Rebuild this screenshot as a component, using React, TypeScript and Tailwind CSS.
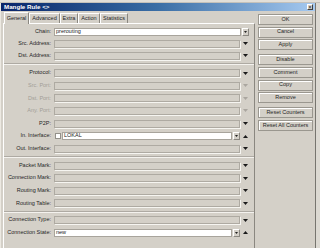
import React from 'react';

type Field = {
  label: string;
  kind: 'combo' | 'chain' | 'iface' | 'state';
  value?: string;
  dim?: boolean;
};

const groups: { rowH: string; sepBefore: string; fields: Field[] }[] = [
  {
    rowH: 'h-[11.8px]',
    sepBefore: '',
    fields: [
      { label: 'Chain:', kind: 'chain', value: 'prerouting' },
      { label: 'Src. Address:', kind: 'combo' },
      { label: 'Dst. Address:', kind: 'combo' },
    ],
  },
  {
    rowH: 'h-[12.6px]',
    sepBefore: 'h-[5.2px]',
    fields: [
      { label: 'Protocol:', kind: 'combo' },
      { label: 'Src. Port:', kind: 'combo', dim: true },
      { label: 'Dst. Port:', kind: 'combo', dim: true },
      { label: 'Any. Port:', kind: 'combo', dim: true },
      { label: 'P2P:', kind: 'combo' },
      { label: 'In. Interface:', kind: 'iface', value: 'LOKAL' },
      { label: 'Out. Interface:', kind: 'combo' },
    ],
  },
  {
    rowH: 'h-[12.6px]',
    sepBefore: 'h-[4.3px]',
    fields: [
      { label: 'Packet Mark:', kind: 'combo' },
      { label: 'Connection Mark:', kind: 'combo' },
      { label: 'Routing Mark:', kind: 'combo' },
      { label: 'Routing Table:', kind: 'combo' },
    ],
  },
  {
    rowH: 'h-[12.6px]',
    sepBefore: 'h-[4.2px]',
    fields: [
      { label: 'Connection Type:', kind: 'combo' },
      { label: 'Connection State:', kind: 'state', value: 'new' },
    ],
  },
];

const buttons = [
  { text: 'OK' },
  { text: 'Cancel' },
  { text: 'Apply' },
  { text: 'Disable', gap: true },
  { text: 'Comment' },
  { text: 'Copy' },
  { text: 'Remove' },
  { text: 'Reset Counters', gap: true },
  { text: 'Reset All Counters' },
];

const tabs = [
  { text: 'General', w: 'w-[25px]' },
  { text: 'Advanced', w: 'w-[31px]' },
  { text: 'Extra', w: 'w-[18px]' },
  { text: 'Action', w: 'w-[22px]' },
  { text: 'Statistics', w: 'w-[28px]' },
];

function DownTri({ dim }: { dim?: boolean }) {
  return (
    <svg width="5" height="3" viewBox="0 0 5 3" className="block">
      <path d="M0 0H5L2.5 3Z" fill={dim ? '#aaa69f' : '#1a1a1a'} />
    </svg>
  );
}

function UpTri() {
  return (
    <svg width="5" height="3" viewBox="0 0 5 3" className="block">
      <path d="M0 3H5L2.5 0Z" fill="#1a1a1a" />
    </svg>
  );
}

function DropBtn() {
  return (
    <div className="w-[7px] h-[8px] bg-[#d4d0c8] border border-t-white border-l-white border-r-[#8a8780] border-b-[#8a8780] flex items-center justify-center">
      <svg width="3" height="2" viewBox="0 0 3 2" className="block">
        <path d="M0 0H3L1.5 2Z" fill="#222" />
      </svg>
    </div>
  );
}

function WhiteInput({ w, value }: { w: string; value?: string }) {
  return (
    <div className={`${w} h-[8px] bg-white border border-[#a8a49c] flex items-center pl-[1px] text-[5.5px] leading-none text-[#222]`}>
      {value}
    </div>
  );
}

function Control({ f }: { f: Field }) {
  if (f.kind === 'chain') {
    return (
      <div className="flex items-center">
        <WhiteInput w="w-[187px]" value={f.value} />
        <div className="ml-[1px]">
          <DropBtn />
        </div>
      </div>
    );
  }
  if (f.kind === 'iface') {
    return (
      <div className="flex items-center">
        <div className="ml-[1px] w-[6px] h-[6px] bg-white border border-[#94918a]" />
        <div className="ml-[1px]">
          <WhiteInput w="w-[170px]" value={f.value} />
        </div>
        <div className="ml-[1px]">
          <DropBtn />
        </div>
        <div className="ml-[3px]">
          <UpTri />
        </div>
      </div>
    );
  }
  if (f.kind === 'state') {
    return (
      <div className="flex items-center">
        <WhiteInput w="w-[178px]" value={f.value} />
        <div className="ml-[1px]">
          <DropBtn />
        </div>
        <div className="ml-[3px]">
          <UpTri />
        </div>
      </div>
    );
  }
  return (
    <div className="flex items-center">
      <div className="w-[186px] h-[8px] bg-[#d4d0c8] border border-[#aeaaa2] shadow-[1px_1px_0_#f6f5f1]" />
      <div className="ml-[3px]">
        <DownTri dim={f.dim} />
      </div>
    </div>
  );
}

export default function App() {
  return (
    <div className="w-[320px] h-[248px] overflow-hidden bg-[#dcd9d2] flex flex-col font-['Liberation_Sans',Arial,sans-serif]">
      {/* strip of whatever sits behind the dialog */}
      <div className="h-[3px] bg-[#e2dfd8] border-b border-[#c4c1ba]" />

      <div className="flex-1 w-[316px] bg-[#d4d0c8] border-l border-r border-l-[#ece9e2] border-r-[#77756f] flex flex-col">
        {/* Title bar */}
        <div className="h-[8px] bg-gradient-to-r from-[#0a246a] via-[#3a6ea5] to-[#a6caf0] flex items-center justify-between pl-[3px] pr-[2px]">
          <span className="text-[6.2px] leading-none font-bold text-white">{'Mangle Rule <>'}</span>
          <div className="w-[6px] h-[6px] bg-[#d4d0c8] border border-t-white border-l-white border-r-[#404040] border-b-[#404040] flex items-center justify-center text-[5px] leading-none text-black">
            ×
          </div>
        </div>

        <div className="flex flex-1">
          {/* Left: tabs + form */}
          <div className="ml-[2px] w-[252px] flex flex-col">
            <div className="h-[12px] flex items-end pl-[1px]">
              {tabs.map((t, i) =>
                i === 0 ? (
                  <div
                    key={t.text}
                    className={`${t.w} h-[12px] -mb-px relative z-10 bg-[#d4d0c8] border border-b-0 border-t-white border-l-white border-r-[#8a8780] flex items-center justify-center text-[5.5px] leading-none text-[#222]`}
                  >
                    {t.text}
                  </div>
                ) : (
                  <div
                    key={t.text}
                    className={`${t.w} h-[10px] bg-[#d4d0c8] border border-b-0 border-t-white border-l-white border-r-[#8a8780] flex items-center justify-center text-[5.5px] leading-none text-[#222]`}
                  >
                    {t.text}
                  </div>
                )
              )}
            </div>

            <div className="flex-1 border border-t-white border-l-white border-r-[#8a8780] border-b-0 pt-[2.3px]">
              {groups.map((g, gi) => (
                <div key={gi}>
                  {gi > 0 && (
                    <div className={`${g.sepBefore} flex flex-col justify-center`}>
                      <div className="h-px bg-[#aeaaa3]" />
                      <div className="h-px bg-[#f4f2ee]" />
                    </div>
                  )}
                  {g.fields.map((f) => (
                    <div key={f.label} className={`${g.rowH} flex items-center`}>
                      <div
                        className={`w-[47px] text-right text-[5.5px] leading-none whitespace-nowrap ${
                          f.dim ? 'text-[#a29e97]' : 'text-[#262626]'
                        }`}
                      >
                        {f.label}
                      </div>
                      <div className="ml-[3px]">
                        <Control f={f} />
                      </div>
                    </div>
                  ))}
                </div>
              ))}
            </div>
          </div>

          {/* Right: buttons */}
          <div className="ml-[3px] w-[55px] pt-[3px] flex flex-col gap-[1.67px]">
            {buttons.map((b) => (
              <div
                key={b.text}
                className={`${b.gap ? 'mt-[2.3px]' : ''} h-[11px] bg-[#d4d0c8] border border-[#9a978f] shadow-[inset_1px_1px_0_#fff] flex items-center justify-center text-[5.5px] leading-none text-[#262626] whitespace-nowrap`}
              >
                {b.text}
              </div>
            ))}
          </div>
        </div>
      </div>
    </div>
  );
}
